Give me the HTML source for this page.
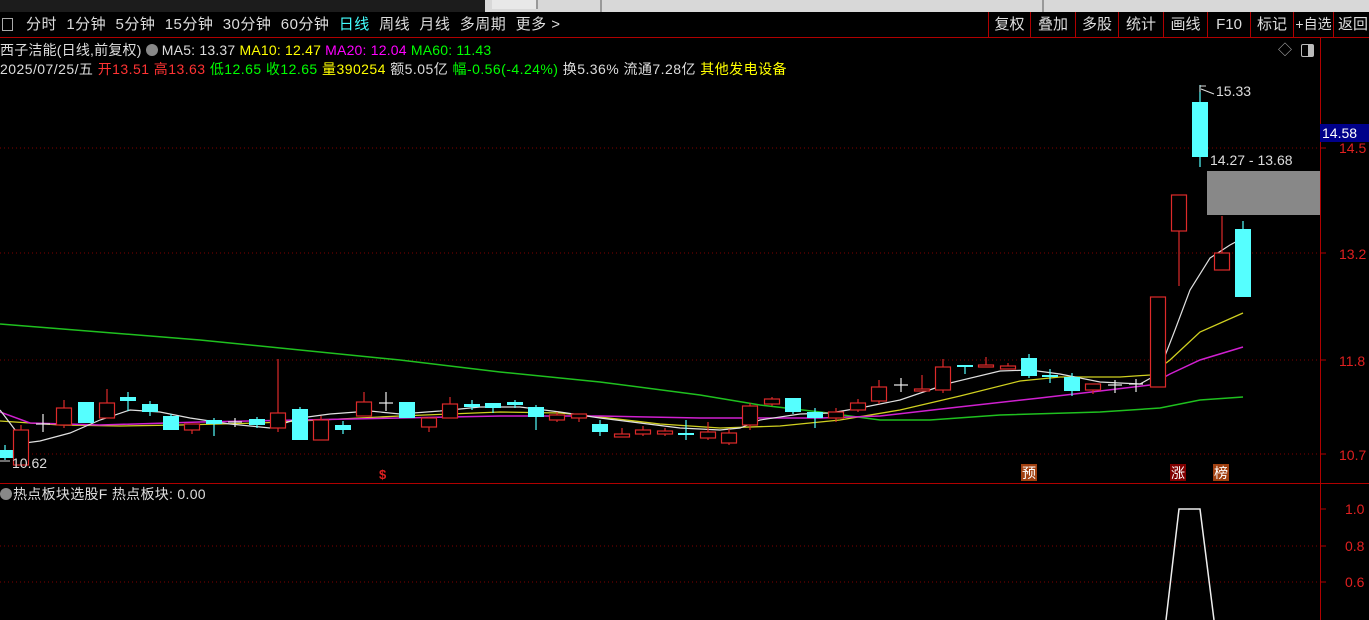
<!DOCTYPE html>
<html><head><meta charset="utf-8">
<style>
html,body{margin:0;padding:0;background:#000;width:1369px;height:620px;overflow:hidden;font-family:"Liberation Sans","Noto Sans CJK SC",sans-serif;}
.t{position:absolute;white-space:nowrap;font-size:14px;line-height:16px;}
.b{position:absolute;top:12px;height:25px;border-left:1px solid #b00000;color:#ddd;font-size:15px;line-height:25px;text-align:center;white-space:nowrap;}
</style></head><body>
<div style="position:relative;width:1369px;height:620px;">
<div style="position:absolute;left:0;top:0;width:485px;height:12px;background:#1c1c1c"></div>
<div style="position:absolute;left:485px;top:0;width:884px;height:12px;background:#d8d8d8"></div>
<div style="position:absolute;left:492px;top:0;width:44px;height:9px;background:#e8e8e8;border-right:2px solid #999"></div>
<div style="position:absolute;left:600px;top:0;width:2px;height:12px;background:#999"></div>
<div style="position:absolute;left:1042px;top:0;width:2px;height:12px;background:#999"></div>
<div style="position:absolute;left:0;top:12px;width:1369px;height:25px;background:#000;border-bottom:1px solid #b00000"></div>
<div style="position:absolute;left:2px;top:18px;width:9px;height:11px;border:1px solid #aaa"></div>
<div class="t" style="left:26px;top:17px;color:#ddd;font-size:15px;letter-spacing:0.5px">分时&nbsp; 1分钟&nbsp; 5分钟&nbsp; 15分钟&nbsp; 30分钟&nbsp; 60分钟&nbsp; <span style="color:#4ff">日线</span>&nbsp; 周线&nbsp; 月线&nbsp; 多周期&nbsp; 更多 &gt;</div>
<div class="b" style="left:988px;width:41px">复权</div>
<div class="b" style="left:1030px;width:44px">叠加</div>
<div class="b" style="left:1075px;width:42px">多股</div>
<div class="b" style="left:1118px;width:44px">统计</div>
<div class="b" style="left:1163px;width:43px">画线</div>
<div class="b" style="left:1207px;width:42px">F10</div>
<div class="b" style="left:1250px;width:42px">标记</div>
<div class="b" style="left:1293px;width:39px;font-size:14px">+自选</div>
<div class="b" style="left:1333px;width:40px;text-align:left;padding-left:4px">返回</div>
<div class="t" style="left:0;top:42px;color:#ddd;letter-spacing:0.2px">西子洁能(日线,前复权) <span style="display:inline-block;width:12px;height:12px;border-radius:6px;background:#888;vertical-align:-1px"></span> MA5: 13.37 <span style="color:#ff0">MA10: 12.47</span> <span style="color:#f0f">MA20: 12.04</span> <span style="color:#0f0">MA60: 11.43</span></div>
<div class="t" style="left:0;top:61px;color:#ddd;letter-spacing:0.45px">2025/07/25/五 <span style="color:#f33">开13.51 高13.63</span> <span style="color:#0f0">低12.65 收12.65</span> <span style="color:#ff0">量390254</span> 额5.05亿 <span style="color:#0f0">幅-0.56(-4.24%)</span> 换5.36% 流通7.28亿 <span style="color:#ff0">其他发电设备</span></div>
<div class="t" style="left:1278px;top:42px;color:#aaa">◇</div>
<div style="position:absolute;left:1301px;top:44px;width:11px;height:11px;border:1px solid #bbb;border-radius:2px;background:linear-gradient(90deg,#000 55%,#bbb 55%)"></div>

<svg width="1369" height="620" style="position:absolute;left:0;top:0" xmlns="http://www.w3.org/2000/svg">
<g stroke="#800000" stroke-dasharray="1,3" stroke-width="1">
<line x1="0" y1="148" x2="1320" y2="148"/><line x1="0" y1="253" x2="1320" y2="253"/>
<line x1="0" y1="360" x2="1320" y2="360"/><line x1="0" y1="454" x2="1320" y2="454"/>
<line x1="0" y1="546" x2="1320" y2="546"/><line x1="0" y1="582" x2="1320" y2="582"/>
</g>
<line x1="1320.5" y1="38" x2="1320.5" y2="620" stroke="#b00000"/>
<line x1="0" y1="483.5" x2="1369" y2="483.5" stroke="#b00000"/>
<g stroke="#b00000">
<line x1="1320" y1="148" x2="1326" y2="148"/><line x1="1320" y1="253" x2="1326" y2="253"/><line x1="1320" y1="360" x2="1326" y2="360"/><line x1="1320" y1="454" x2="1326" y2="454"/>
<line x1="1320" y1="509" x2="1326" y2="509"/><line x1="1320" y1="546" x2="1326" y2="546"/><line x1="1320" y1="582" x2="1326" y2="582"/>
</g>
<g fill="#e02020" font-family="Liberation Sans" font-size="14">
<text x="1339" y="153">14.5</text><text x="1339" y="259">13.2</text><text x="1339" y="366">11.8</text><text x="1339" y="460">10.7</text>
<text x="1345" y="514">1.0</text><text x="1345" y="551">0.8</text><text x="1345" y="587">0.6</text>
</g>
<rect x="1320" y="124" width="49" height="18" fill="#00008a"/>
<text x="1322" y="138" fill="#fff" font-family="Liberation Sans" font-size="14">14.58</text>

<polyline fill="none" stroke="#1fc01f" stroke-width="1.5" points="0,324 100,332 200,340 300,350 400,360 500,372 600,382 700,395 760,405 820,412 880,420 930,420 1000,415 1100,412 1160,408 1200,400 1243,397"/>
<polyline fill="none" stroke="#d0d020" stroke-width="1.3" points="0,421 60,425 120,426 180,425 260,423 320,420 400,416 500,412 560,413 600,417 660,424 720,428 780,426 840,420 900,410 960,396 1020,381 1060,377 1120,377 1150,375 1170,360 1200,332 1243,313"/>
<polyline fill="none" stroke="#d020d0" stroke-width="1.5" points="0,412 30,423 100,425 200,422 300,420 400,418 500,416 600,416 700,418 760,418 820,418 880,416 950,408 1040,398 1100,391 1150,385 1170,374 1200,360 1243,347"/>
<polyline fill="none" stroke="#e0e0e0" stroke-width="1.2" points="0,410 25,443 40,441 70,433 100,420 130,410 160,412 190,418 230,424 270,428 300,418 330,414 370,411 400,414 440,411 480,407 520,407 560,412 600,418 640,423 680,428 720,430 740,428 760,420 800,414 830,413 860,408 900,400 950,383 1000,371 1030,370 1060,374 1100,382 1140,384 1158,374 1175,330 1190,290 1210,258 1230,245 1243,238"/>

<g id="candles" stroke-width="1.2"></g>
<text x="12" y="468" fill="#ddd" font-family="Liberation Sans" font-size="14">10.62</text>
<path d="M0 461 L10 461" stroke="#ddd"/>
<path d="M1200 92 L1200 86 L1206 86 M1201 89 L1214 94" stroke="#ddd" fill="none"/>
<text x="1216" y="96" fill="#ddd" font-family="Liberation Sans" font-size="14">15.33</text>
<text x="1210" y="165" fill="#ddd" font-family="Liberation Sans" font-size="14">14.27 - 13.68</text>
<rect x="1207" y="171" width="113" height="44" fill="#888"/>
<text x="379" y="479" fill="#e02020" font-family="Liberation Sans" font-size="13" font-weight="bold">$</text>
<rect x="1021" y="464" width="16" height="17" fill="#a04010"/>
<text x="1022" y="478" fill="#fff" font-size="14" font-family="Noto Sans CJK SC">预</text>
<rect x="1170" y="464" width="16" height="17" fill="#800000"/>
<text x="1171" y="478" fill="#fff" font-size="14" font-family="Noto Sans CJK SC">涨</text>
<rect x="1213" y="464" width="16" height="17" fill="#a04010"/>
<text x="1214" y="478" fill="#fff" font-size="14" font-family="Noto Sans CJK SC">榜</text>
<polyline fill="none" stroke="#eee" stroke-width="1.5" points="1166,620 1179,509 1200,509 1214,620"/>
<circle cx="6" cy="494" r="6" fill="#888"/>
<text x="13" y="499" fill="#ddd" font-size="14" font-family="Liberation Sans, Noto Sans CJK SC" letter-spacing="0.3">热点板块选股F  热点板块: 0.00</text>
</svg>
</div>
<script>
var d=[[5,'c',450,458,445,460],[21,'r',430,465,425,465],[43,'x',424,424,414,432],[64,'r',408,425,400,428],[86,'c',402,423,402,423],[107,'r',403,418,389,418],[128,'c',397,401,392,411],[150,'c',404,412,401,416],[171,'c',416,430,414,430],[192,'r',424,430,424,434],[214,'c',420,424,418,436],[235,'x',422,422,418,427],[257,'c',419,425,417,428],[278,'r',413,428,359,432],[300,'c',409,440,407,440],[321,'r',420,440,416,440],[343,'c',425,430,421,434],[364,'r',402,416,392,416],[386,'x',403,403,392,411],[407,'c',402,418,402,418],[429,'r',418,427,417,432],[450,'r',404,418,397,418],[472,'c',404,407,400,410],[493,'c',403,408,403,413],[515,'c',402,405,400,408],[536,'c',407,417,405,430],[557,'r',415,420,412,422],[579,'r',414,418,414,422],[600,'c',424,432,420,436],[622,'r',434,437,428,437],[643,'r',430,434,426,436],[665,'r',431,434,428,436],[686,'c',433,435,420,440],[708,'r',432,438,422,440],[729,'r',433,443,429,445],[750,'r',406,425,403,430],[772,'r',399,404,397,406],[793,'c',398,412,398,414],[815,'c',412,418,408,428],[836,'r',412,418,408,422],[858,'r',403,410,399,412],[879,'r',387,401,380,404],[901,'x',385,385,378,392],[922,'r',389,391,375,391],[943,'r',367,390,359,393],[965,'c',365,367,365,374],[986,'r',365,367,357,367],[1008,'r',366,369,363,369],[1029,'c',358,376,354,378],[1050,'c',375,376,369,383],[1072,'c',377,391,373,396],[1093,'r',384,390,384,394],[1115,'x',385,385,380,393],[1136,'x',384,384,379,392],[1158,'r',297,387,297,387],[1179,'r',195,231,195,286],[1200,'c',102,157,85,167],[1222,'r',253,270,216,270],[1243,'c',229,297,221,297]];
var g=document.getElementById('candles'),s='';
d.forEach(function(c){var x=c[0],col=c[1]=='c'?'#55ffff':(c[1]=='x'?'#eeeeee':'#dd2a2a');
s+='<line x1="'+x+'" y1="'+c[4]+'" x2="'+x+'" y2="'+c[5]+'" stroke="'+col+'"/>';
if(c[1]=='x'){s+='<line x1="'+(x-7)+'" y1="'+c[2]+'" x2="'+(x+7)+'" y2="'+c[2]+'" stroke="'+col+'"/>';}
else if(c[1]=='c'){s+='<rect x="'+(x-8)+'" y="'+c[2]+'" width="16" height="'+Math.max(2,c[3]-c[2])+'" fill="'+col+'"/>';}
else{s+='<rect x="'+(x-7.5)+'" y="'+c[2]+'" width="15" height="'+Math.max(2,c[3]-c[2])+'" fill="#000" stroke="'+col+'"/>';}
});
g.innerHTML=s;
</script>
</body></html>
